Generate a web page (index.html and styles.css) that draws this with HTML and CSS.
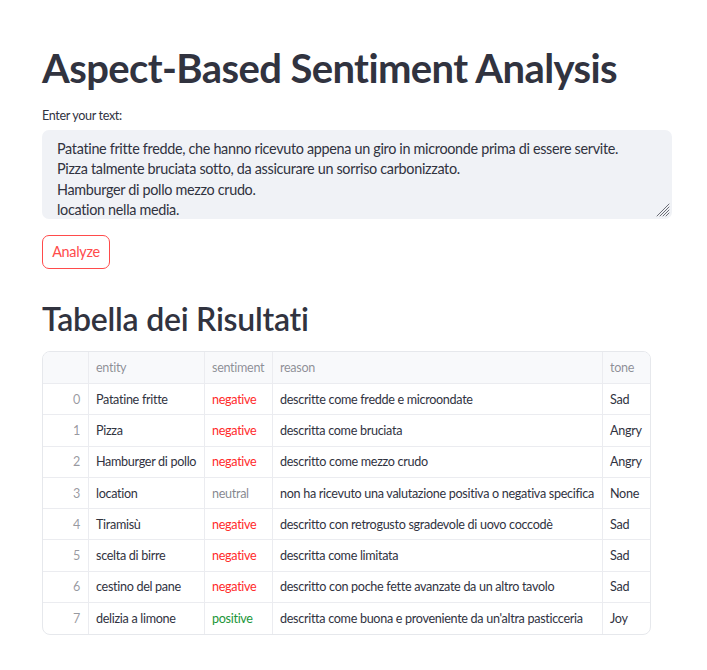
FILE: index.html
```html
<!DOCTYPE html>
<html lang="it">
<head>
<meta charset="utf-8">
<title>Aspect-Based Sentiment Analysis</title>
<link rel="stylesheet" href="styles.css">
</head>
<body>
<main class="app">
  <h1 class="title">Aspect-Based Sentiment Analysis</h1>
  <label class="label" for="txt">Enter your text:</label>
  <div class="area-wrap">
    <textarea id="txt" class="area">Patatine fritte fredde, che hanno ricevuto appena un giro in microonde prima di essere servite.
Pizza talmente bruciata sotto, da assicurare un sorriso carbonizzato.
Hamburger di pollo mezzo crudo.
location nella media.
Tiramisù con retrogusto sgradevole di uovo coccodè.
Scelta di birre limitata.
Cestino del pane con poche fette avanzate da un altro tavolo.
Delizia a limone buona, ma proveniente da un'altra pasticceria.</textarea>
    <svg class="grip" width="14" height="14" viewBox="0 0 14 14" aria-hidden="true">
      <g stroke="#6b6d76" stroke-width="1" stroke-linecap="round">
        <line x1="13" y1="1" x2="1" y2="13"/>
        <line x1="13" y1="4" x2="4" y2="13"/>
        <line x1="13" y1="7" x2="7" y2="13"/>
        <line x1="13" y1="10" x2="10" y2="13"/>
      </g>
    </svg>
  </div>
  <button class="btn" type="button">Analyze</button>
  <h2 class="subtitle">Tabella dei Risultati</h2>
  <div class="grid">
    <div class="cell head idx"></div>
    <div class="cell head">entity</div>
    <div class="cell head">sentiment</div>
    <div class="cell head">reason</div>
    <div class="cell head">tone</div>

    <div class="cell idx">0</div><div class="cell">Patatine fritte</div><div class="cell neg">negative</div><div class="cell">descritte come fredde e microondate</div><div class="cell">Sad</div>
    <div class="cell idx">1</div><div class="cell">Pizza</div><div class="cell neg">negative</div><div class="cell">descritta come bruciata</div><div class="cell">Angry</div>
    <div class="cell idx">2</div><div class="cell">Hamburger di pollo</div><div class="cell neg">negative</div><div class="cell">descritto come mezzo crudo</div><div class="cell">Angry</div>
    <div class="cell idx">3</div><div class="cell">location</div><div class="cell neu">neutral</div><div class="cell">non ha ricevuto una valutazione positiva o negativa specifica</div><div class="cell">None</div>
    <div class="cell idx">4</div><div class="cell">Tiramisù</div><div class="cell neg">negative</div><div class="cell">descritto con retrogusto sgradevole di uovo coccodè</div><div class="cell">Sad</div>
    <div class="cell idx">5</div><div class="cell">scelta di birre</div><div class="cell neg">negative</div><div class="cell">descritta come limitata</div><div class="cell">Sad</div>
    <div class="cell idx">6</div><div class="cell">cestino del pane</div><div class="cell neg">negative</div><div class="cell">descritto con poche fette avanzate da un altro tavolo</div><div class="cell">Sad</div>
    <div class="cell idx last">7</div><div class="cell last">delizia a limone</div><div class="cell pos last">positive</div><div class="cell last">descritta come buona e proveniente da un'altra pasticceria</div><div class="cell last">Joy</div>
  </div>
</main>
</body>
</html>
```

FILE: styles.css
```css
* { box-sizing: border-box; }

html, body {
  margin: 0;
  padding: 0;
  background: #ffffff;
}

body {
  font-family: "Lato", "Noto Sans", "Liberation Sans", sans-serif;
  color: rgb(49, 51, 63);
  letter-spacing: -0.3px;
}

.app {
  width: 707px;
  padding: 44px 35px 0 42px;
  display: flex;
  flex-direction: column;
  align-items: flex-start;
}

.title {
  margin: 0;
  font-size: 40px;
  line-height: 48px;
  font-weight: 700;
  letter-spacing: -0.6px;
  color: rgb(49, 51, 63);
}

.label {
  margin-top: 16px;
  font-size: 12.6px;
  line-height: 16px;
  height: 16px;
  letter-spacing: -0.35px;
  color: rgb(49, 51, 63);
}

.area-wrap {
  position: relative;
  margin-top: 6px;
  width: 630px;
  height: 89px;
}

.area {
  display: block;
  width: 100%;
  height: 100%;
  margin: 0;
  border: none;
  border-radius: 7px;
  background: rgb(240, 242, 246);
  padding: 9px 15px 0 15px;
  font-family: inherit;
  font-size: 14.4px;
  line-height: 20.3px;
  letter-spacing: -0.32px;
  color: rgb(49, 51, 63);
  resize: none;
  overflow: hidden;
  outline: none;
}

.grip {
  position: absolute;
  right: 2px;
  bottom: 2px;
}

.btn {
  margin-top: 16px;
  height: 34px;
  width: 68px;
  padding: 0;
  background: #ffffff;
  border: 1px solid rgb(255, 75, 75);
  border-radius: 7px;
  color: rgb(255, 75, 75);
  font-family: inherit;
  font-size: 14.4px;
  line-height: 20px;
  letter-spacing: -0.3px;
}

.subtitle {
  margin: 30px 0 0 0;
  font-size: 32px;
  line-height: 40px;
  font-weight: 600;
  letter-spacing: -0.25px;
  color: rgb(49, 51, 63);
}

.grid {
  margin-top: 12px;
  display: grid;
  grid-template-columns: 46px 116px 68px 330px 47px;
  grid-template-rows: 32px repeat(8, 31.3px);
  border: 1px solid rgb(230, 232, 236);
  border-radius: 8px;
  overflow: hidden;
  font-size: 12.6px;
  letter-spacing: -0.31px;
  color: rgb(49, 51, 63);
}

.cell {
  display: flex;
  align-items: center;
  padding: 0 7px;
  white-space: nowrap;
  border-right: 1px solid rgb(235, 236, 240);
  border-bottom: 1px solid rgb(235, 236, 240);
  overflow: hidden;
}

.cell:nth-child(5n) { border-right: none; }
.cell.last { border-bottom: none; }

.head {
  background: rgb(248, 249, 251);
  color: rgba(49, 51, 63, 0.55);
}

.idx {
  justify-content: flex-end;
  padding-right: 8px;
  color: rgba(49, 51, 63, 0.5);
}

.neg { color: rgb(255, 43, 43); }
.neu { color: rgba(49, 51, 63, 0.6); }
.pos { color: rgb(33, 150, 56); }
```
